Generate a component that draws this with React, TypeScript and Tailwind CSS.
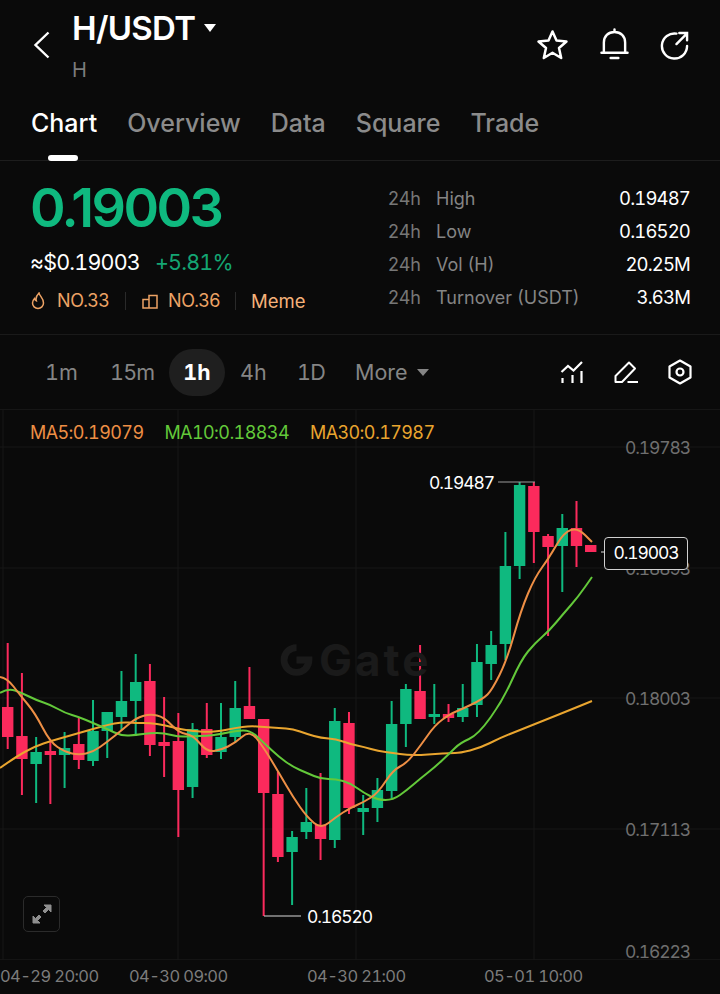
const GREEN = '#0fb97f'
const RED = '#fb2a5c'

// [kind, wick top, wick bottom, body top, body bottom] in page y
const candles: [string, number, number, number, number][] = [
  ['r', 643, 749, 707, 737],
  ['r', 673, 795, 736, 759],
  ['g', 737, 803, 752, 764],
  ['r', 742, 804, 751, 755],
  ['g', 732, 788, 748, 755],
  ['r', 718, 769, 744, 760],
  ['g', 700, 766, 731, 761],
  ['g', 712, 758, 712, 731],
  ['g', 671, 730, 701, 717],
  ['g', 654, 736, 682, 701],
  ['r', 664, 756, 681, 745],
  ['r', 697, 777, 742, 746],
  ['r', 713, 837, 741, 790],
  ['g', 723, 798, 729, 787],
  ['r', 703, 758, 729, 755],
  ['g', 703, 759, 737, 752],
  ['g', 681, 743, 708, 737],
  ['r', 667, 719, 706, 719],
  ['r', 719, 916, 719, 793],
  ['r', 772, 862, 794, 857],
  ['g', 831, 905, 837, 852],
  ['g', 788, 839, 822, 832],
  ['r', 773, 860, 825, 839],
  ['g', 708, 848, 721, 840],
  ['r', 712, 814, 723, 808],
  ['g', 795, 835, 808, 812],
  ['g', 778, 822, 790, 808],
  ['g', 701, 798, 724, 791],
  ['g', 684, 747, 689, 724],
  ['r', 645, 719, 691, 719],
  ['g', 684, 724, 714, 716],
  ['r', 704, 722, 714, 718],
  ['g', 684, 722, 708, 717],
  ['g', 644, 717, 662, 705],
  ['g', 631, 680, 645, 664],
  ['g', 532, 660, 566, 644],
  ['g', 482, 579, 485, 566],
  ['r', 482, 563, 486, 532],
  ['r', 534, 636, 536, 547],
  ['g', 514, 592, 528, 546],
  ['r', 501, 567, 528, 546],
  ['r', 545, 552, 545, 552],
]

const ma5 = [[0,677],[7,678],[20,695],[35,713],[50,742],[65,752],[79,755],[93,752],[107,742],[122,730],[136,718],[150,714],[164,717],[179,733],[193,735],[207,752],[221,750],[235,743],[250,730],[264,748],[279,773],[293,797],[307,817],[321,829],[336,817],[350,808],[364,802],[378,793],[393,770],[407,763],[421,745],[435,725],[450,714],[460,710],[483,699],[492,690],[507,660],[521,610],[535,577],[549,558],[564,532],[578,528],[592,542]]
const ma10 = [[0,693],[8,688],[22,693],[36,700],[51,705],[65,713],[79,717],[93,723],[107,729],[122,736],[136,735],[150,733],[164,733],[179,737],[193,736],[207,736],[221,734],[235,731],[250,730],[264,743],[279,757],[293,767],[307,773],[321,779],[336,779],[350,783],[364,793],[378,800],[393,800],[407,790],[421,778],[435,767],[450,753],[460,743],[478,735],[503,700],[521,660],[535,643],[549,631],[564,613],[578,597],[592,577]]
const ma30 = [[0,768],[17,756],[36,746],[51,741],[65,737],[79,733],[93,729],[107,725],[122,722],[136,723],[150,723],[164,725],[179,729],[193,731],[207,732],[221,731],[235,728],[250,726],[264,727],[279,728],[293,729],[307,734],[321,738],[336,739],[350,744],[364,747],[378,751],[393,753],[407,755],[421,755],[435,754],[450,753],[460,753],[480,748],[500,738],[520,730],[550,718],[570,710],[592,701]]

// midpoints joined with quadratics, keeps the MA lines smooth
function smooth(pts: number[][]) {
  let d = `M${pts[0][0]} ${pts[0][1]}`
  for (let i = 1; i < pts.length - 1; i++) {
    const mx = (pts[i][0] + pts[i + 1][0]) / 2
    const my = (pts[i][1] + pts[i + 1][1]) / 2
    d += ` Q${pts[i][0]} ${pts[i][1]} ${mx} ${my}`
  }
  const last = pts[pts.length - 1]
  return d + ` L${last[0]} ${last[1]}`
}

const stats = [
  ['High', '0.19487'],
  ['Low', '0.16520'],
  ['Vol (H)', '20.25M'],
  ['Turnover (USDT)', '3.63M'],
]

function CandleChart() {
  return (
    <svg className="block h-[550px] w-[720px]" viewBox="0 410 720 550" fill="none">
      {[447, 568, 698, 829].map((y) => (
        <line key={y} x1="0" x2="720" y1={y} y2={y} stroke="#161616" />
      ))}
      {[3, 178, 356, 534].map((x) => (
        <line key={x} x1={x} x2={x} y1="410" y2="960" stroke="#161616" />
      ))}
      {candles.map(([kind, wt, wb, bt, bb], i) => {
        const x = 7.7 + i * 14.22
        const color = kind === 'g' ? GREEN : RED
        return (
          <g key={i} fill={color}>
            <rect x={x - 1} y={wt} width="2" height={wb - wt} />
            <rect x={x - 5.7} y={bt} width="11.4" height={Math.max(bb - bt, 3)} />
          </g>
        )
      })}
      <path d={smooth(ma30)} stroke="#e9a52f" strokeWidth="2" />
      <path d={smooth(ma10)} stroke="#63c93a" strokeWidth="2" />
      <path d={smooth(ma5)} stroke="#ee8f45" strokeWidth="2" />
      <path d="M498 482H535" stroke="#9a9a9a" strokeWidth="1.2" />
      <path d="M264 916H301" stroke="#d8d8d8" strokeWidth="1.2" />
      <path d="M601 552H605" stroke="#bbbbbb" strokeWidth="1.2" />
    </svg>
  )
}

export default function App() {
  return (
    <main className="h-[994px] w-[720px] overflow-hidden bg-[#0a0a0a] font-['Inter',sans-serif] text-white">
      <header className="flex h-[100px] items-start justify-between pr-[31px] pl-[33px]">
        <div className="flex">
          <svg className="mt-[31px] h-[28px] w-[18px]" viewBox="0 0 18 28" fill="none" stroke="#fff" strokeWidth="2.4">
            <path d="M15.500 1.500 2.500 14l13 12.500" />
          </svg>
          <div className="ml-[21px]">
            <div className="flex items-center pt-[8px]">
              <span className="text-[33px] leading-[40px] font-semibold tracking-[-0.7px]">H/USDT</span>
              <span className="ml-[9px] h-0 w-0 border-x-[6.500px] border-t-[8px] border-x-transparent border-t-white" />
            </div>
            <p className="mt-[10px] text-[20px] leading-[24px] text-[#7c7c7c]">H</p>
          </div>
        </div>
        <div className="mt-[28px] flex items-center gap-[31px]">
          <svg className="h-[32px] w-[33px]" viewBox="0 0 32 32" fill="none" stroke="#fff" strokeWidth="2.500" strokeLinejoin="round">
            <path d="M16 2.500 20 11.500 30 12.500 22.500 19 24.700 29 16 23.800 7.300 29 9.500 19 2 12.500 12 11.500Z" />
          </svg>
          <svg className="h-[33px] w-[29px]" viewBox="0 0 30 34" fill="none" stroke="#fff" strokeWidth="2.500" strokeLinecap="round">
            <path d="M4 25V15C4 8.500 8.500 4 15 4s11 4.500 11 11v10M1.500 25.500h27M11 31h8M15 1.500V4" />
          </svg>
          <svg className="h-[30px] w-[29px]" viewBox="0 0 30 30" fill="none" stroke="#fff" strokeWidth="2.500" strokeLinecap="round">
            <path d="M17 3.200A13 13 0 1 0 28 16" />
            <path d="M17 14 27.500 3.500M20 2.500h8v7.500" />
          </svg>
        </div>
      </header>

      <nav className="relative flex h-[61px] gap-[30px] border-b border-[#1d1d1d] pt-[7px] pl-[31px] text-[25px] leading-[32px] font-medium text-[#8b8b8b]">
        <span className="text-white">Chart</span>
        <span>Overview</span>
        <span>Data</span>
        <span>Square</span>
        <span>Trade</span>
        <span className="absolute bottom-[-1px] left-[48px] h-[6px] w-[30px] rounded-full bg-white" />
      </nav>

      <section className="flex h-[174px] justify-between border-b border-[#1a1a1a] pr-[30px] pl-[30px]">
        <div>
          <p className="mt-[15px] text-[54px] leading-[64px] font-semibold tracking-[-2.600px] text-[#0fb97f]">0.19003</p>
          <div className="mt-[9px] flex gap-[15px] text-[21.500px] leading-[27px] tracking-[-0.8px] tabular-nums">
            <span>≈$0.19003</span>
            <span className="text-[#14a573]">+5.81%</span>
          </div>
          <div className="mt-[13px] flex items-center text-[18px] leading-[24px] tracking-[-0.3px] text-[#eda365]">
            <svg className="mr-[11px] h-[18px] w-[16px]" viewBox="0 0 16 18" fill="none" stroke="#eda365" strokeWidth="1.500">
              <path d="M9 1c.500 3 4.500 5 4.500 10a5.500 5.500 0 0 1-11 0c0-2 1-3.500 2-4.500.2 1.500 1 2 1.800 2.300C5.500 6 7 3 9 1Z" />
            </svg>
            <span>NO.33</span>
            <span className="mx-[16px] h-[18px] w-px bg-[#2a2a2a]" />
            <svg className="mr-[10px] h-[16px] w-[16px]" viewBox="0 0 16 16" fill="none" stroke="#eda365" strokeWidth="1.500">
              <path d="M1 6.500h6V15H1zM7 15V2.500h8V15H7" />
            </svg>
            <span>NO.36</span>
            <span className="mx-[15px] h-[18px] w-px bg-[#2a2a2a]" />
            <span className="text-[18.500px] tracking-normal text-[#f6b27a]">Meme</span>
          </div>
        </div>
        <dl className="mt-[21px] w-[302px] text-[18px] leading-[33px]">
          {stats.map(([label, value]) => (
            <div key={label} className="flex">
              <dt className="w-[48px] text-[#777777]">24h</dt>
              <dd className="flex-1 text-[#858585]">{label}</dd>
              <dd className="text-[18.500px] tracking-[-0.850px] text-white tabular-nums">{value}</dd>
            </div>
          ))}
        </dl>
      </section>

      <div className="flex h-[75px] items-center border-b border-[#161616] pr-[28px] pl-[45px] text-[21.500px] text-[#858585] tabular-nums">
        <span className="w-[65px]">1m</span>
        <span className="w-[59px] tracking-[-0.800px]">15m</span>
        <span className="flex h-[47px] w-[56px] items-center justify-center rounded-full bg-[#1f1f1f] font-bold text-white">1h</span>
        <span className="ml-[15px] w-[57px]">4h</span>
        <span className="w-[58px] tracking-[-0.800px]">1D</span>
        <span>More</span>
        <span className="ml-[9px] h-0 w-0 border-x-[6px] border-t-[7px] border-x-transparent border-t-[#858585]" />
        <div className="ml-auto flex items-center gap-[30px]">
          <svg className="h-[24px] w-[24px]" viewBox="0 0 24 24" fill="none" stroke="#fff" strokeWidth="2.200">
            <path d="M1.500 12 8 6l5.500 4.500L22 2" />
            <path d="M2.500 18v5M12.500 15v8M21.500 11v12" />
          </svg>
          <svg className="h-[24px] w-[24px]" viewBox="0 0 24 24" fill="none" stroke="#fff" strokeWidth="2" strokeLinejoin="round">
            <path d="M1.500 22v-6L15 2.500l6 6L8 22ZM13.500 22H24" />
          </svg>
          <svg className="h-[26px] w-[24px]" viewBox="0 0 24 26" fill="none" stroke="#fff" strokeWidth="2.200" strokeLinejoin="round">
            <path d="M12 1.500 22.500 7.500v11L12 24.500 1.500 18.500v-11Z" />
            <circle cx="12" cy="13" r="3.500" />
          </svg>
        </div>
      </div>

      <div className="relative h-[550px] border-b border-[#141414]">
        <CandleChart />
        <div className="absolute top-[11px] left-[30px] flex gap-[21px] text-[18px] leading-[24px] tracking-[-0.600px] tabular-nums">
          <span className="text-[#ee8f45]">MA5:0.19079</span>
          <span className="text-[#63c93a]">MA10:0.18834</span>
          <span className="text-[#e9a52f]">MA30:0.17987</span>
        </div>
        <div className="absolute top-[226px] left-[279px] flex items-center gap-[5px] text-[#1a1a1a]">
          <svg className="h-[34px] w-[35px]" viewBox="0 0 30 30" fill="none" stroke="#1a1a1a" strokeWidth="6">
            <path d="M15 4a11 11 0 1 0 11 11H15" />
          </svg>
          <span className="text-[44px] leading-[48px] font-bold tracking-[3px]">Gate</span>
        </div>
        {[
          ['0.19783', 'top-[26px]'],
          ['0.18893', 'top-[147px]'],
          ['0.18003', 'top-[277px]'],
          ['0.17113', 'top-[408px]'],
          ['0.16223', 'top-[530px]'],
        ].map(([price, top]) => (
          <span key={price} className={`absolute right-[30px] text-[17.500px] leading-[24px] tracking-[-1.100px] text-[#6f6f6f] tabular-nums ${top}`}>
            {price}
          </span>
        ))}
        <span className="absolute top-[61px] left-[429px] text-[17.500px] leading-[24px] tracking-[-1.100px] tabular-nums">0.19487</span>
        <span className="absolute top-[495px] left-[307px] text-[17.500px] leading-[24px] tracking-[-1.100px] tabular-nums">0.16520</span>
        <span className="absolute top-[127px] left-[604px] flex h-[33px] w-[84px] items-center justify-center rounded-[4px] border border-[#d0d0d0] bg-[#0a0a0a] text-[17.500px] tracking-[-1.100px] tabular-nums">
          0.19003
        </span>
        <div className="absolute top-[486px] left-[23px] flex h-[36px] w-[37px] items-center justify-center rounded-[5px] border border-[#2b2b2b]">
          <svg className="h-[20px] w-[20px]" viewBox="0 0 20 20" fill="#8f8f8f" stroke="#8f8f8f">
            <path d="M12 1h7v7l-2.500-2.500L13 9l-2-2 3.500-3.500ZM8 19H1v-7l2.500 2.500L7 11l2 2-3.500 3.500Z" />
          </svg>
        </div>
      </div>

      <div className="relative h-[33px] text-[16.500px] leading-[33px] tracking-[-0.600px] text-[#7c7c7c] tabular-nums">
        <span className="absolute top-0 left-0">04-29 20:00</span>
        <span className="absolute top-0 left-[129px]">04-30 09:00</span>
        <span className="absolute top-0 left-[307px]">04-30 21:00</span>
        <span className="absolute top-0 left-[484px]">05-01 10:00</span>
      </div>
    </main>
  )
}
